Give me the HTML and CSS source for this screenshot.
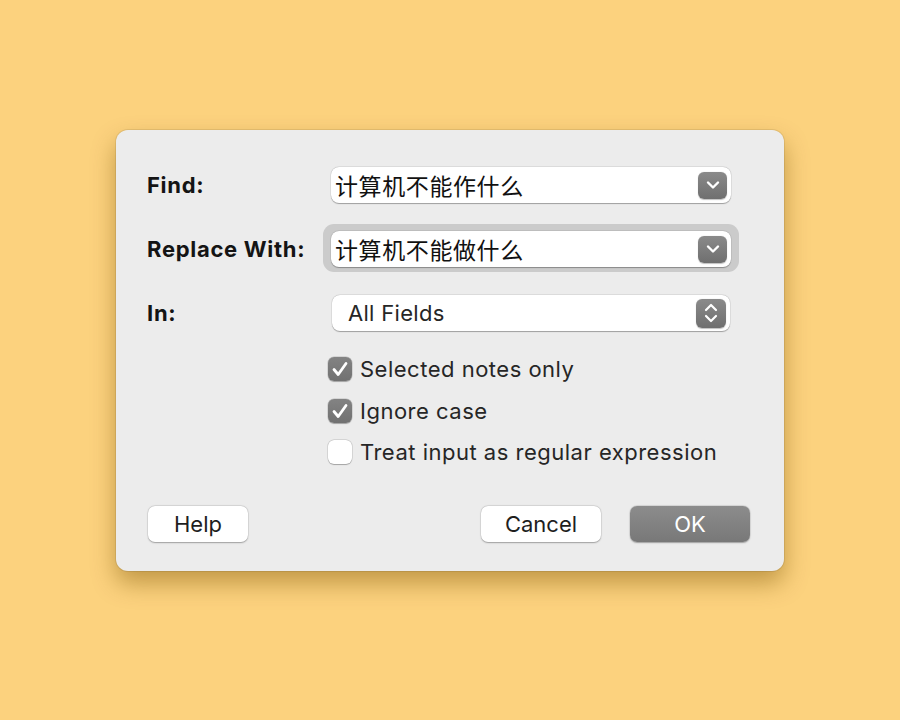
FILE: index.html
```html
<!DOCTYPE html>
<html>
<head>
<meta charset="utf-8">
<link rel="stylesheet" href="styles.css">
</head>
<body>
<div class="dialog">
  <div class="form">
    <div class="label">Find:</div>
    <div class="field combo">
      <span class="value cjk">计算机不能作什么</span>
      <span class="btn"><svg width="16" height="10" viewBox="0 0 16 10"><polyline points="3,2.5 8,7.5 13,2.5" fill="none" stroke="#fff" stroke-width="2.4" stroke-linecap="round" stroke-linejoin="round"/></svg></span>
    </div>

    <div class="label">Replace With:</div>
    <div class="focus">
      <div class="field combo">
        <span class="value cjk">计算机不能做什么</span>
        <span class="btn"><svg width="16" height="10" viewBox="0 0 16 10"><polyline points="3,2.5 8,7.5 13,2.5" fill="none" stroke="#fff" stroke-width="2.4" stroke-linecap="round" stroke-linejoin="round"/></svg></span>
      </div>
    </div>

    <div class="label">In:</div>
    <div class="field popup">
      <span class="value">All Fields</span>
      <span class="btn step"><svg width="16" height="24" viewBox="0 0 16 24"><polyline points="3,9 8,4 13,9" fill="none" stroke="#fff" stroke-width="2.2" stroke-linecap="round" stroke-linejoin="round"/><polyline points="3,15 8,20 13,15" fill="none" stroke="#fff" stroke-width="2.2" stroke-linecap="round" stroke-linejoin="round"/></svg></span>
    </div>
  </div>

  <div class="checks">
    <label class="check"><span class="box on"><svg width="20" height="20" viewBox="0 0 20 20"><polyline points="4,10.5 8.2,15.5 16,4.5" fill="none" stroke="#fff" stroke-width="2.8" stroke-linecap="round" stroke-linejoin="round"/></svg></span><span class="ctext">Selected notes only</span></label>
    <label class="check"><span class="box on"><svg width="20" height="20" viewBox="0 0 20 20"><polyline points="4,10.5 8.2,15.5 16,4.5" fill="none" stroke="#fff" stroke-width="2.8" stroke-linecap="round" stroke-linejoin="round"/></svg></span><span class="ctext">Ignore case</span></label>
    <label class="check"><span class="box"></span><span class="ctext">Treat input as regular expression</span></label>
  </div>

  <div class="buttons">
    <button class="pb help">Help</button>
    <div class="right">
      <button class="pb">Cancel</button>
      <button class="pb ok">OK</button>
    </div>
  </div>
</div>
</body>
</html>
```
FILE: styles.css
```css
html, body {
  margin: 0;
  padding: 0;
}
body {
  background: #fcd27e;
  width: 900px;
  height: 720px;
  display: flex;
  justify-content: center;
  align-items: flex-start;
  font-family: "Inter", "Liberation Sans", "Noto Sans CJK SC", sans-serif;
  color: #222;
}
.dialog {
  margin-top: 130px;
  width: 668px;
  height: 441px;
  box-sizing: border-box;
  background: #ececec;
  border-radius: 12px;
  box-shadow: 0 0 0 1px rgba(0,0,0,0.08), 0 12px 24px rgba(120,80,0,0.45);
  padding: 37px 34px 29px 31px;
  display: flex;
  flex-direction: column;
}
.form {
  display: grid;
  grid-template-columns: 184px 400px;
  grid-auto-rows: 36px;
  row-gap: 28px;
  align-items: center;
}
.label {
  font-weight: 700;
  font-size: 22px;
  color: #141414;
  letter-spacing: 0.7px;
}
.field {
  height: 36px;
  box-sizing: border-box;
  background: #fff;
  border-radius: 8px;
  box-shadow: 0 0.5px 1px rgba(0,0,0,0.3), 0 0 0 0.5px rgba(0,0,0,0.08);
  display: flex;
  align-items: center;
  justify-content: space-between;
  padding: 0 4px 0 4px;
}
.focus {
  margin: -7px -8px -5px -8px;
  padding: 7px 8px 5px 8px;
  background: #cbcbcb;
  border-radius: 11px;
  height: 36px;
}
.value {
  font-size: 22px;
  color: #111;
  letter-spacing: 0.3px;
}
.cjk {
  font-family: "Noto Sans CJK SC", sans-serif;
  font-size: 23px;
  letter-spacing: 0.6px;
}
.popup {
  margin-left: 1px;
  margin-right: 1px;
  padding-left: 16px;
}
.popup .value {
  color: #262626;
}
.btn {
  width: 29px;
  height: 27px;
  border-radius: 6px;
  background: linear-gradient(#8a8a8a, #6f6f6f);
  display: flex;
  align-items: center;
  justify-content: center;
  box-shadow: 0 0.5px 1px rgba(0,0,0,0.25);
}
.btn.step {
  width: 30px;
  height: 29px;
}
.checks {
  margin-top: 26px;
  margin-left: 181px;
  display: flex;
  flex-direction: column;
  gap: 17.5px;
}
.check {
  display: flex;
  align-items: center;
  height: 24px;
  gap: 8px;
}
.box {
  width: 24px;
  height: 24px;
  box-sizing: border-box;
  border-radius: 6px;
  background: #fff;
  box-shadow: 0 0 0 0.5px rgba(0,0,0,0.15), 0 0.5px 1px rgba(0,0,0,0.25);
  display: flex;
  align-items: center;
  justify-content: center;
}
.box.on {
  background: linear-gradient(#838383, #717171);
}
.ctext {
  font-size: 22px;
  color: #262626;
  letter-spacing: 0.5px;
}
.buttons {
  margin-top: auto;
  display: flex;
  justify-content: space-between;
  padding-left: 1px;
}
.right {
  display: flex;
  gap: 29px;
}
.pb {
  font-family: inherit;
  font-size: 22px;
  color: #1e1e1e;
  height: 36px;
  width: 120px;
  border: none;
  border-radius: 7px;
  background: #fff;
  box-shadow: 0 0.5px 1.5px rgba(0,0,0,0.3), 0 0 0 0.5px rgba(0,0,0,0.08);
  padding: 0;
}
.pb.help {
  width: 100px;
}
.pb.ok {
  background: linear-gradient(#8c8c8c, #787878);
  color: #fff;
}
```
